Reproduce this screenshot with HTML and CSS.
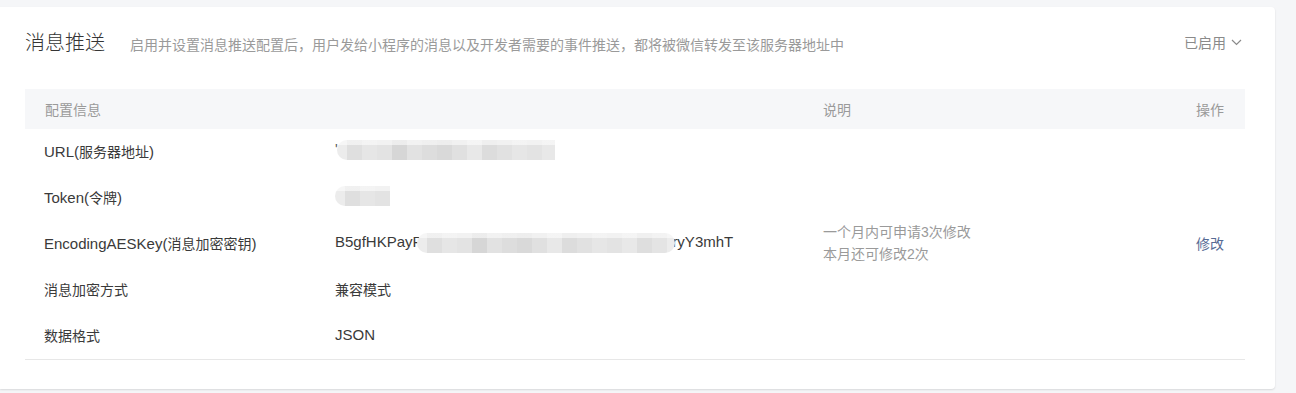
FILE: index.html
```html
<!DOCTYPE html>
<html lang="zh-CN">
<head>
<meta charset="utf-8">
<title>消息推送</title>
<link rel="stylesheet" href="styles.css">
</head>
<body>
<div class="page">
  <section class="card">
    <header class="card-head">
      <h2 class="card-title">消息推送</h2>
      <p class="card-desc">启用并设置消息推送配置后，用户发给小程序的消息以及开发者需要的事件推送，都将被微信转发至该服务器地址中</p>
      <div class="status">已启用<svg class="chev" width="11" height="7" viewBox="0 0 11 7"><polyline points="1,1 5.5,5.5 10,1" fill="none" stroke="#8a8a8a" stroke-width="1.2"/></svg></div>
    </header>
    <table class="cfg">
      <colgroup>
        <col class="c1"><col class="c2"><col class="c3"><col class="c4">
      </colgroup>
      <thead>
        <tr><th>配置信息</th><th></th><th>说明</th><th class="right">操作</th></tr>
      </thead>
      <tbody>
        <tr><td><span class="lat">URL(</span>服务器地址<span class="lat">)</span></td><td><span class="tick">'</span><span class="mosaic m-url"></span></td><td></td><td></td></tr>
        <tr><td><span class="lat">Token(</span>令牌<span class="lat">)</span></td><td><span class="mosaic m-token"></span></td><td></td><td></td></tr>
        <tr><td><span class="lat">EncodingAESKey(</span>消息加密密钥<span class="lat">)</span></td><td><span class="lat">B5gfHKPayR</span><span class="mosaic m-key"></span><span class="lat">ryY3mhT</span></td><td class="note">一个月内可申请3次修改<br>本月还可修改2次</td><td class="right"><a class="link" href="#">修改</a></td></tr>
        <tr><td>消息加密方式</td><td>兼容模式</td><td></td><td></td></tr>
        <tr><td>数据格式</td><td><span class="lat">JSON</span></td><td></td><td></td></tr>
      </tbody>
    </table>
  </section>
</div>
</body>
</html>
```

FILE: styles.css
```css
* { box-sizing: border-box; }
html, body { margin: 0; padding: 0; }
body {
  background: #f5f6f8;
  font-family: "Liberation Sans", "Noto Sans CJK SC", sans-serif;
  font-size: 14px;
  color: #3a3a3a;
  width: 1296px;
  height: 393px;
  overflow: hidden;
}
.page { padding: 7px 21px 0 0; }
.card {
  background: #fff;
  width: 1275px;
  border-radius: 0 4px 4px 0;
  box-shadow: 0 1px 2px rgba(0,0,0,0.12);
  padding: 21px 30px 29px 25px;
}
.card-head {
  display: flex;
  align-items: center;
  height: 28px;
  margin-bottom: 33px;
}
.card-title {
  margin: 0;
  font-size: 20px;
  font-weight: 300;
  color: #353535;
  line-height: 28px;
  font-family: "Noto Sans CJK SC", sans-serif;
}
.card-desc {
  margin: 4px 0 0 25px;
  color: #9a9a9a;
  font-size: 14px;
  font-family: "Noto Sans CJK SC", sans-serif;
  line-height: 20px;
  flex: 1;
}
.status {
  color: #8a8a8a;
  display: flex;
  align-items: center;
  gap: 5px;
  margin-right: 3px;
}
.chev { display: block; margin-top: 1px; }
.cfg {
  width: 1220px;
  border-collapse: collapse;
  table-layout: fixed;
  border-bottom: 1px solid #e7e7e7;
}
.c1 { width: 290px; }
.c2 { width: 488px; }
.c3 { width: 342px; }
.c4 { width: 100px; }
.cfg th {
  background: #f6f7f9;
  height: 40px;
  font-weight: normal;
  color: #9a9a9a;
  text-align: left;
  padding: 0 20px;
}
.cfg td {
  height: 46px;
  padding: 0 20px 2px;
  vertical-align: middle;
  white-space: nowrap;
}
.cfg td:first-child { padding-left: 19px; }
.cfg .right { text-align: right; padding-right: 21px; }
.lat { font-size: 15px; }
.note { color: #9a9a9a; line-height: 22px; }
.link { color: #576b95; text-decoration: none; }
.tick { color: #555; display: inline-block; width: 2px; vertical-align: top; line-height: 14px; }
.mosaic {
  display: inline-block;
  vertical-align: middle;
  height: 20px;
  position: relative;
  border-radius: 10px 0 0 10px;
  background:
    linear-gradient(to bottom, rgba(255,255,255,0.55) 0, rgba(255,255,255,0.55) 5px, rgba(255,255,255,0) 5px),
    linear-gradient(to right,
      #ececec 0 10px, #dfdfdf 10px 25px, #e6e6e6 25px 40px, #e3e3e3 40px 55px,
      #d6d6d6 55px 70px, #e2e2e2 70px 85px, #dddddd 85px 100px, #d9d9d9 100px 115px,
      #e0e0e0 115px 130px, #e8e8e8 130px 145px, #dcdcdc 145px 160px, #e1e1e1 160px 175px,
      #e6e6e6 175px 190px, #e3e3e3 190px 205px, #e8e8e8 205px 220px, #dedede 220px 235px,
      #e4e4e4 235px 250px, #ececec 250px 280px);
}
.m-url { width: 218px; margin-top: -2px; }
.m-token { width: 55px; margin-top: -2px; }
.m-key {
  width: 258px;
  border-radius: 10px;
  margin-left: -6px;
  margin-right: -3px;
  margin-top: -2px;
}
```
